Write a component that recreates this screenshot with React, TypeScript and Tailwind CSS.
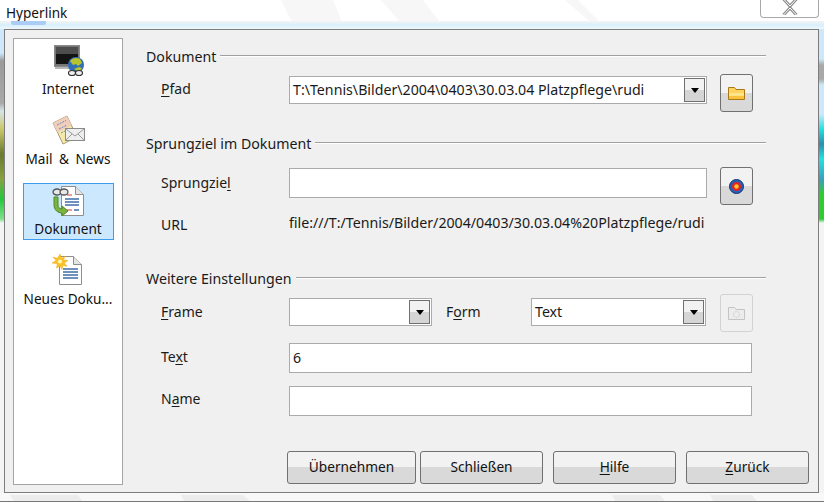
import type { ReactNode } from 'react';

const font = { fontFamily: '"Noto Sans", "Open Sans", sans-serif' };

function MonitorIcon() {
  return (
    <svg width="31" height="33" viewBox="0 0 31 33" className="ml-[2px]">
      <rect x="0.5" y="0.5" width="25" height="21" fill="#777" stroke="#8a8a8a" />
      <rect x="2" y="2" width="22" height="17" fill="#141414" />
      <rect x="2" y="2" width="22" height="7" fill="#4d4d4d" />
      <rect x="1" y="22" width="24" height="2" fill="#b5b5b5" />
      <circle cx="22" cy="20" r="8" fill="#2f6fb8" />
      <path d="M16 16c2-3 7-4 10-2l2 4-4 3-2-2-3 1zM20 24l5-2 3 1-3 4z" fill="#b7c22c" />
      <ellipse cx="18" cy="28" rx="3.5" ry="2.5" fill="#eee" stroke="#333" strokeWidth="1.2" />
      <ellipse cx="25" cy="28" rx="3.5" ry="2.5" fill="#eee" stroke="#333" strokeWidth="1.2" />
    </svg>
  );
}

function MailIcon() {
  return (
    <svg width="33" height="31" viewBox="0 0 33 31">
      <path d="M1 8L15 1l10 21-14 7z" fill="#f4e9a8" stroke="#a79a78" />
      <path d="M1 8L15 1l4.5 9.5-14 7z" fill="#f1cdbc" />
      <path d="M5 10l9-4.5M7 14l8-4M9 18l5-2.5" stroke="#5b84b8" strokeWidth="0.9" strokeDasharray="2 1" />
      <rect x="13.5" y="13.5" width="19" height="12" fill="#eeeeee" stroke="#8b8b8b" />
      <path d="M14 14l9 7 9-7M14 25l6-6M32 25l-6-6" fill="none" stroke="#9a9a9a" />
    </svg>
  );
}

function LinkedDocIcon() {
  return (
    <svg width="33" height="31" viewBox="0 0 33 31">
      <path d="M9.5 0.5h14l8 8v21h-22z" fill="#fff" stroke="#8e8e8e" />
      <path d="M23.5 0.5v8h8" fill="#e4e4e4" stroke="#8e8e8e" />
      <path d="M15 9h5M15 24h5" stroke="#d83a2e" strokeWidth="1.2" />
      <path d="M13 13h14M13 16h14M13 19h14M22 24h5" stroke="#3f6fa8" strokeWidth="1.3" />
      <path d="M2 11v8c0 5 4 8 8 8v3l6-5-6-5v3c-3 0-4-2-4-4v-8z" fill="#7cb342" stroke="#4d8a1f" />
      <ellipse cx="5" cy="6" rx="4" ry="3" fill="#e8e8e8" stroke="#555" strokeWidth="1.3" />
      <ellipse cx="12" cy="6" rx="4" ry="3" fill="#e8e8e8" stroke="#555" strokeWidth="1.3" />
    </svg>
  );
}

function NewDocIcon() {
  return (
    <svg width="32" height="31" viewBox="0 0 32 31">
      <path d="M7.5 2.5h14l8 8v20h-22z" fill="#fff" stroke="#8e8e8e" />
      <path d="M21.5 2.5v8h8" fill="#e4e4e4" stroke="#8e8e8e" />
      <path d="M11 15h15M11 18h15M11 21h15M11 24h15" stroke="#3f6fa8" strokeWidth="1.3" />
      <path d="M8 0l1.6 4.4L13 2l-1.5 3.9 4.5.6-3.6 2.4 2.6 3.4-4.2-.9L10 15.5 8 12l-3.5 2 .8-4.2L0 9l4-2.5L1 3l4.5 1.2z" fill="#f7c325" stroke="#f2a818" strokeWidth="0.5" />
      <circle cx="8" cy="7.5" r="2" fill="#fff6c0" />
    </svg>
  );
}

function FolderIcon() {
  return (
    <svg width="17" height="14" viewBox="0 0 17 14">
      <path d="M0.5 13.5V1.5h6l1.500 2h8.500v10z" fill="#ffd45e" stroke="#a9761b" />
      <rect x="1" y="7" width="15" height="3" fill="#ffe48a" />
      <rect x="1" y="10" width="15" height="3" fill="#fbc33c" />
    </svg>
  );
}

function TargetIcon() {
  return (
    <svg width="15" height="15" viewBox="0 0 15 15">
      <circle cx="7.5" cy="7.5" r="7" fill="#1f62c4" stroke="#17325f" />
      <circle cx="7.5" cy="7.5" r="4.5" fill="#e5231f" />
      <circle cx="7.5" cy="7.5" r="2.2" fill="#f6c62c" />
    </svg>
  );
}

function GhostFolderIcon() {
  return (
    <svg width="17" height="14" viewBox="0 0 17 14">
      <path d="M0.5 13.5V1.5h6l1.500 2h8.500v10z" fill="#ececec" stroke="#c4c4c4" />
      <circle cx="8.5" cy="8.5" r="3" fill="none" stroke="#c4c4c4" strokeDasharray="1 1" />
    </svg>
  );
}

function SideItem({ icon, label, active, className, labelClass }: { icon: ReactNode; label: string; active?: boolean; className: string; labelClass: string }) {
  return (
    <div className={`flex flex-col items-center ${className} ${active ? 'bg-[#cce8ff] border border-[#3d9bf0]' : 'border border-transparent'}`}>
      {icon}
      <span className={`text-[13.6px] leading-[18px] text-[#111] whitespace-nowrap ${labelClass}`}>{label}</span>
    </div>
  );
}

function Heading({ label, className }: { label: string; className: string }) {
  return (
    <div className={`flex items-center gap-[4px] h-[20px] w-[620px] ${className}`}>
      <span className="text-[14.2px] leading-[20px] text-[#1a1a1a] whitespace-nowrap">{label}</span>
      <div className="flex-1 h-[2px] border-t border-[#a0a0a0] bg-white mt-[-3px]" />
    </div>
  );
}

function Mn({ children }: { children: ReactNode }) {
  return <span className="underline underline-offset-2">{children}</span>;
}

function Field({ className, children }: { className: string; children?: ReactNode }) {
  return (
    <div className={`bg-white border border-[#ababab] flex items-center pl-[3px] text-[14.2px] text-[#1a1a1a] whitespace-nowrap overflow-hidden ${className}`}>
      {children}
    </div>
  );
}

function Combo({ className, children }: { className: string; children?: ReactNode }) {
  return (
    <div className={`bg-white border border-[#ababab] flex items-center justify-between pl-[3px] pr-[1px] text-[14.2px] text-[#1a1a1a] whitespace-nowrap ${className}`}>
      <span>{children}</span>
      <div className="w-[21px] h-[24px] border border-[#707070] bg-gradient-to-b from-[#f2f2f2] from-50% to-[#d5d5d5] to-50% flex items-center justify-center">
        <div className="w-0 h-0 border-x-[4px] border-x-transparent border-t-[5px] border-t-black" />
      </div>
    </div>
  );
}

function IconButton({ children, disabled, className }: { children: ReactNode; disabled?: boolean; className?: string }) {
  return (
    <div className={`w-[33px] h-[38px] rounded-[3px] border flex items-center justify-center shrink-0 ${disabled ? 'border-[#d2d2d2] bg-[#f0f0f0]' : 'border-[#707070] bg-gradient-to-b from-[#f2f2f2] from-50% to-[#d9d9d9] to-50%'} ${className ?? ''}`}>
      {children}
    </div>
  );
}

function PushButton({ children, className }: { children: ReactNode; className: string }) {
  return (
    <div className={`h-[33px] rounded-[3px] border border-[#707070] bg-gradient-to-b from-[#f2f2f2] from-50% to-[#d9d9d9] to-50% flex items-center justify-center text-[13.7px] text-[#111] ${className}`}>
      {children}
    </div>
  );
}

function Label({ children, className }: { children: ReactNode; className?: string }) {
  return <span className={`text-[14px] leading-[21px] text-[#1a1a1a] whitespace-nowrap ${className ?? ''}`}>{children}</span>;
}

export default function App() {
  return (
    <div className="w-[824px] h-[503px] overflow-hidden flex flex-col bg-white" style={font}>
      {/* title bar */}
      <div className="relative h-[29px] shrink-0 flex flex-col bg-white">
        <svg width="824" height="22" viewBox="0 0 824 22" className="absolute left-0 top-0">
          <path d="M281 0h52l9 22h-50zM381 0h42l17 22h-40zM565 0h13l22 22h-10z" fill="#f7f7f7" />
        </svg>
        <div className="relative h-[21px] flex justify-between items-start pl-[6px] pr-[5px]">
          <span className="text-[13.6px] leading-[18px] mt-[4px] text-[#111]">Hyperlink</span>
          <div className="w-[59px] h-[18px] border border-t-0 border-[#a8a8a8] rounded-b-[4px] bg-white flex items-start justify-center">
            <svg width="16" height="15" viewBox="0 0 16 15">
              <path d="M1.5-1l6.5 7 6.5-7M1.5 15l6.500-7 6.500 7" fill="none" stroke="#8a8a8a" strokeWidth="3" />
              <path d="M1.5-1l6.5 7 6.5-7M1.5 15l6.500-7 6.500 7" fill="none" stroke="#ffffff" strokeWidth="1" />
            </svg>
          </div>
        </div>
        <div className="relative flex-1 bg-gradient-to-b from-[#f4f4f4] via-[#d8effc] to-[#eef7fc]">
          <div className="ml-[11px] w-[35px] h-[4px] rounded-b-[2px] bg-[#a9cdf5]" />
        </div>
      </div>

      <div className="flex-1 flex min-h-0">
        <div className="w-[4px] bg-[linear-gradient(to_bottom,#cde8fb_0px,#cde8fb_24px,#9a9a9a_32px,#a8a8a8_74px,#d6e4ea_82px,#c9c86a_100px,#6a7a30_125px,#88a040_150px,#22c83c_170px,#7fe08a_190px,#f4f4f4_194px)]" />
        {/* dialog */}
        <div className="w-[815px] border border-[#7d7d7d] bg-[#f0f0f0] flex pl-[8px] pt-[8px]">
          <div className="w-[110px] h-[447px] shrink-0 bg-white border border-[#a5a5a5] flex flex-col items-center pt-[5px]">
            <SideItem icon={<MonitorIcon />} label="Internet" className="w-[100px]" labelClass="mt-[2px]" />
            <SideItem icon={<MailIcon />} label="Mail & News" className="w-[100px] mt-[15px]" labelClass="mt-[4px] [word-spacing:3px]" />
            <SideItem icon={<LinkedDocIcon />} label="Dokument" active className="w-[91px] h-[57px] mt-[14px] pt-[2px]" labelClass="mt-[3px]" />
            <SideItem icon={<NewDocIcon />} label="Neues Doku..." className="w-[100px] mt-[13px]" labelClass="mt-[5px]" />
          </div>

          <div className="flex-1 pl-[23px]">
            <Heading label="Dokument" className="mt-[9px]" />

            <div className="flex mt-[7px] pl-[15px]">
              <div className="w-[128px] mt-[2px]"><Label><Mn>P</Mn>fad</Label></div>
              <Combo className="w-[418px] h-[28px] mt-[2px]">T:\Tennis\Bilder\2004\0403\30.03.04 Platzpflege\rudi</Combo>
              <IconButton className="ml-[13px]"><FolderIcon /></IconButton>
            </div>

            <Heading label="Sprungziel im Dokument" className="mt-[22px]" />

            <div className="flex mt-[13px] pl-[15px]">
              <div className="w-[128px] mt-[3px]"><Label>Sprungzie<Mn>l</Mn></Label></div>
              <Field className="w-[418px] h-[30px] mt-[1px]" />
              <IconButton className="ml-[13px]"><TargetIcon /></IconButton>
            </div>

            <div className="flex mt-[7px] pl-[15px]">
              <div className="w-[128px]"><Label>URL</Label></div>
              <span className="text-[14.2px] leading-[21px] text-[#1a1a1a] whitespace-nowrap">file:///T:/Tennis/Bilder/2004/0403/30.03.04%20Platzpflege/rudi</span>
            </div>

            <Heading label="Weitere Einstellungen" className="mt-[33px]" />

            <div className="flex mt-[5px] pl-[15px]">
              <div className="w-[128px] mt-[5px]"><Label><Mn>F</Mn>rame</Label></div>
              <Combo className="w-[143px] h-[28px] mt-[4px]" />
              <div className="w-[99px] pl-[14px] mt-[5px]"><Label>F<Mn>o</Mn>rm</Label></div>
              <Combo className="w-[175px] h-[28px] mt-[4px]">Text</Combo>
              <IconButton disabled className="ml-[14px]"><GhostFolderIcon /></IconButton>
            </div>

            <div className="flex mt-[11px] pl-[15px]">
              <div className="w-[128px] mt-[1px]"><Label>Te<Mn>x</Mn>t</Label></div>
              <Field className="w-[463px] h-[30px]">6</Field>
            </div>

            <div className="flex mt-[13px] pl-[15px]">
              <div className="w-[128px]"><Label>N<Mn>a</Mn>me</Label></div>
              <Field className="w-[463px] h-[30px]" />
            </div>

            <div className="flex mt-[35px] ml-[141px]">
              <PushButton className="w-[129px]">Übernehmen</PushButton>
              <PushButton className="w-[123px] ml-[4px]">Schließen</PushButton>
              <PushButton className="w-[123px] ml-[10px]"><span><Mn>H</Mn>ilfe</span></PushButton>
              <PushButton className="w-[123px] ml-[10px]"><span><Mn>Z</Mn>urück</span></PushButton>
            </div>
          </div>
        </div>
        <div className="w-[5px] bg-[linear-gradient(to_bottom,#cde8fb_0px,#cde8fb_30px,#a8a8a8_36px,#a8a8a8_50px,#cde8fb_56px,#cde8fb_85px,#25e0e0_100px,#2a90b0_115px,#25e0e0_130px,#3aa0c0_150px,#2ecc30_165px,#2ecc30_190px,#f4f4f4_194px)]" />
      </div>

      {/* strip below the dialog */}
      <div className="h-[10px] shrink-0 flex flex-col bg-white">
        <svg width="824" height="8" viewBox="0 0 824 8" className="block shrink-0">
          <rect width="824" height="8" fill="#f8f8f8" />
          <path d="M10 2h68l4 6H14zM181 2h62l7 6h-66zM612 2h48l5 6h-50zM710 2h42l5 6h-44z" fill="#ececec" />
        </svg>
        <div className="h-[1px] bg-[#777]" />
        <div className="flex-1 bg-white" />
      </div>
    </div>
  );
}
